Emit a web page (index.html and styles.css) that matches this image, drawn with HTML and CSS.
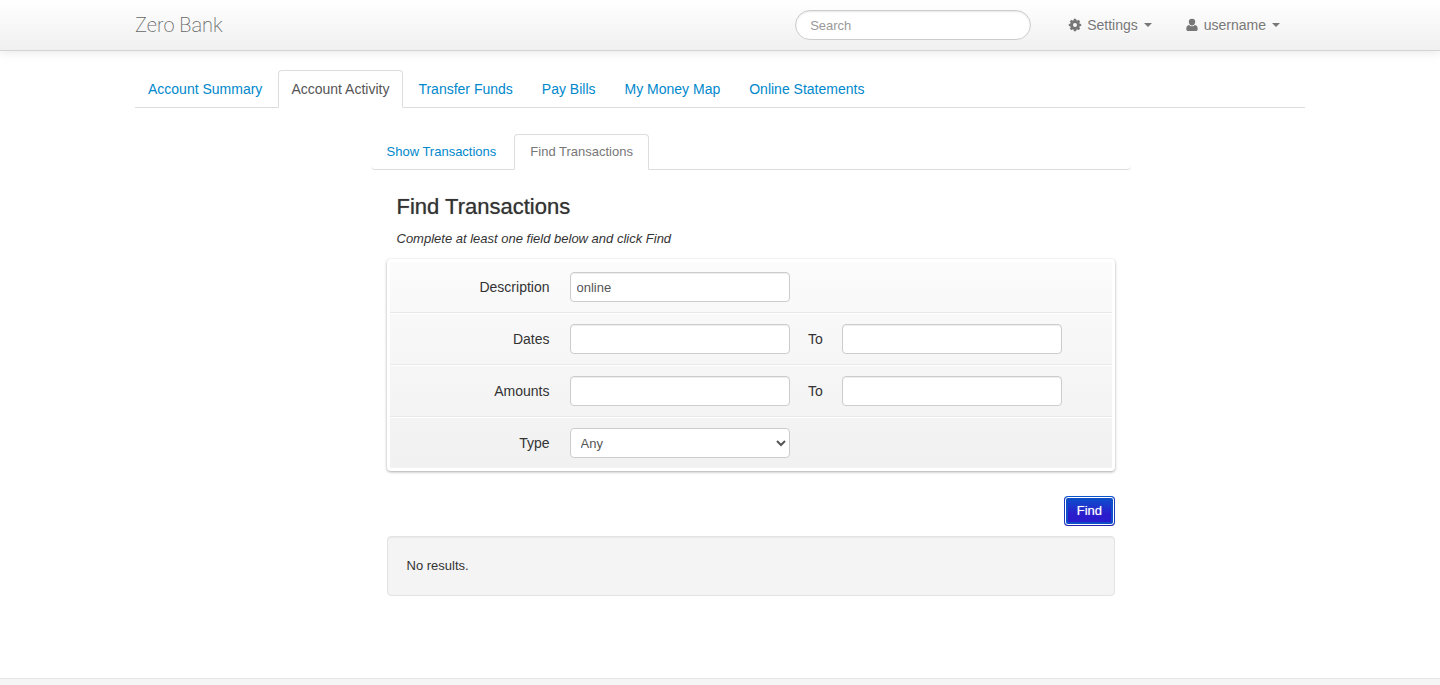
FILE: index.html
```
<!DOCTYPE html>
<html lang="en">
<head>
<meta charset="utf-8">
<meta name="viewport" content="width=device-width, initial-scale=1">
<title>Zero - Account Activity</title>
<link rel="stylesheet" href="styles.css">
</head>
<body>
<header class="navbar">
  <div class="container navbar-inner">
    <a class="brand" href="#">Zero Bank</a>
    <form class="search-form">
      <input class="search" type="text" placeholder="Search" aria-label="Search">
    </form>
    <nav class="user-nav">
      <a class="menu" href="#">
        <svg class="icon" viewBox="0 0 14 14" aria-hidden="true"><g fill="currentColor"><path fill-rule="evenodd" d="M7 2.200a4.800 4.800 0 1 0 0 9.600a4.800 4.800 0 1 0 0-9.600zM7 5a2 2 0 1 1 0 4a2 2 0 1 1 0-4z"/><path id="tooth" d="M5.900.8h2.200l.5 2.200H5.400z"/><use href="#tooth" transform="rotate(45 7 7)"/><use href="#tooth" transform="rotate(90 7 7)"/><use href="#tooth" transform="rotate(135 7 7)"/><use href="#tooth" transform="rotate(180 7 7)"/><use href="#tooth" transform="rotate(225 7 7)"/><use href="#tooth" transform="rotate(270 7 7)"/><use href="#tooth" transform="rotate(315 7 7)"/></g></svg>
        <span>Settings</span><span class="caret"></span>
      </a>
      <a class="menu" href="#">
        <svg class="icon" viewBox="0 0 14 14" aria-hidden="true"><path fill="currentColor" d="M7 .8a3.200 3.200 0 0 1 3.200 3.300C10.200 6 8.800 7.500 7 7.500S3.800 6 3.800 4.100A3.200 3.200 0 0 1 7 .8zM4 6.900c.8.900 1.800 1.400 3 1.400s2.200-.5 3-1.400c1.900.3 2.700 2 2.700 4 0 1.300-.9 2.100-2 2.100H3.300c-1.100 0-2-.8-2-2.100 0-2 .8-3.700 2.700-4z"/></svg>
        <span>username</span><span class="caret"></span>
      </a>
    </nav>
  </div>
</header>

<main class="container main">
  <nav class="tabs">
    <a class="tab" href="#">Account Summary</a>
    <a class="tab active" href="#" aria-current="page">Account Activity</a>
    <a class="tab" href="#">Transfer Funds</a>
    <a class="tab" href="#">Pay Bills</a>
    <a class="tab" href="#">My Money Map</a>
    <a class="tab" href="#">Online Statements</a>
  </nav>

  <section class="board">
    <nav class="subtabs">
      <a class="subtab" href="#">Show Transactions</a>
      <a class="subtab active" href="#" aria-current="page">Find Transactions</a>
    </nav>
    <div class="board-content">
      <h2 class="title">Find Transactions</h2>
      <p class="hint">Complete at least one field below and click Find</p>
      <form>
        <div class="panel">
          <div class="row">
            <label class="label" for="description">Description</label>
            <input class="field" id="description" type="text" value="online">
          </div>
          <div class="row">
            <label class="label" for="date-from">Dates</label>
            <input class="field" id="date-from" type="text">
            <label class="to" for="date-to">To</label>
            <input class="field" id="date-to" type="text">
          </div>
          <div class="row">
            <label class="label" for="amount-from">Amounts</label>
            <input class="field" id="amount-from" type="text">
            <label class="to" for="amount-to">To</label>
            <input class="field" id="amount-to" type="text">
          </div>
          <div class="row">
            <label class="label" for="type">Type</label>
            <select class="field select" id="type">
              <option>Any</option>
              <option>Deposit</option>
              <option>Withdrawal</option>
            </select>
          </div>
        </div>
        <div class="actions"><button class="find" type="button">Find</button></div>
      </form>
      <div class="results">No results.</div>
    </div>
  </section>
</main>
<footer class="footer"></footer>
</body>
</html>
```
FILE: styles.css
```
* { box-sizing: border-box; }

body {
  margin: 0;
  min-height: 100vh;
  display: flex;
  flex-direction: column;
  background: #fff;
  color: #333;
  font: 13px/20px "Liberation Sans", Arial, sans-serif;
}

a { color: #0088cc; text-decoration: none; }

input, select, button { font: inherit; }

.container {
  width: 100%;
  max-width: 1170px;
  margin: 0 auto;
}

.navbar {
  background: linear-gradient(#fff, #f0f0f0);
  border-bottom: 1px solid #d4d4d4;
  box-shadow: 0 1px 10px rgba(0, 0, 0, 0.1);
}

.navbar-inner {
  display: flex;
  align-items: center;
  height: 50px;
  padding-right: 25px;
}

.brand {
  color: #666;
  font-family: Roboto, "Liberation Sans", sans-serif;
  font-size: 20px;
  font-weight: 200;
}

.search-form { margin-left: auto; }

.search {
  display: block;
  width: 236px;
  height: 30px;
  padding: 4px 14px;
  border: 1px solid #ccc;
  border-radius: 15px;
  background: #fff;
  box-shadow: inset 0 1px 2px rgba(0, 0, 0, 0.1);
}

.search::placeholder { color: #999; opacity: 1; }

.user-nav {
  display: flex;
  gap: 33px;
  margin-left: 37px;
}

.menu {
  display: flex;
  align-items: center;
  color: #777;
  font-size: 14px;
  text-shadow: 0 1px 0 #fff;
}

.icon {
  width: 14px;
  height: 14px;
  margin-right: 5px;
}

.caret {
  margin-left: 6px;
  border: 4px solid transparent;
  border-top-color: #777;
  border-bottom: 0;
}

.main {
  flex: 1;
  padding-top: 19px;
  padding-bottom: 82px;
}

.tabs {
  display: flex;
  gap: 2px;
  border-bottom: 1px solid #ddd;
}

.tab {
  margin-bottom: -1px;
  padding: 8px 13px 8px 12px;
  border: 1px solid transparent;
  border-radius: 4px 4px 0 0;
  font-size: 14px;
}

.tab.active {
  border-color: #ddd;
  border-bottom-color: #fff;
  background: #fff;
  color: #555;
}

.board {
  width: 65%;
  margin: 26px 174px 0 auto;
}

.subtabs {
  display: flex;
  gap: 2px;
  border-bottom: 1px solid #ddd;
  border-radius: 4px;
}

.subtab {
  margin-bottom: -1px;
  padding: 7px 15px;
  border: 1px solid transparent;
  border-radius: 4px 4px 0 0;
}

.subtab.active {
  border-color: #ddd;
  border-bottom-color: #fff;
  background: #fff;
  color: #777;
}

.board-content { padding: 22px 16px 0; }

.title {
  margin: 0 10px;
  color: #333;
  font-size: 22px;
  font-weight: 400;
  line-height: 30px;
  text-shadow: 0 0 1px rgba(0, 0, 0, 0.5);
}

.hint {
  margin: 7px 10px 10px;
  font-style: italic;
}

.panel {
  padding: 3px;
  border-radius: 4px;
  background: linear-gradient(#fbfbfb, #f1f1f1) content-box, #fff;
  box-shadow: 0 1px 3px rgba(0, 0, 0, 0.35);
}

.row {
  display: flex;
  align-items: center;
  height: 52px;
  border-top: 1px solid #fff;
  border-bottom: 1px solid #e8e8e8;
}

.row:first-child { border-top: 0; height: 51px; }
.row:last-child { border-bottom: 0; height: 51px; }

.label {
  width: 160px;
  margin-right: 20px;
  font-size: 14px;
  text-align: right;
}

.to {
  width: 52px;
  font-size: 14px;
  text-align: center;
}

.field {
  width: 220px;
  height: 30px;
  padding: 4px 6px;
  border: 1px solid #ccc;
  border-radius: 4px;
  background: #fff;
  color: #555;
  box-shadow: inset 0 1px 1px rgba(0, 0, 0, 0.075);
}

.select { box-shadow: none; }

.actions {
  display: flex;
  justify-content: flex-end;
  margin: 25px 0 10px;
}

.find {
  height: 30px;
  padding: 0 12px;
  border: 1px solid;
  border-color: #0b55cc #1b3cbc #2322aa;
  border-radius: 4px;
  background: linear-gradient(#0b55cc, #2a1ccc 60%);
  box-shadow: inset 0 0 0 1px #fff, inset 0 0 0 3px #0f4cc8;
  color: #fff;
  text-shadow: 0 0 1px rgba(255, 255, 255, 0.5);
}

.results {
  padding: 19px;
  border: 1px solid #e3e3e3;
  border-radius: 4px;
  background: #f4f4f4;
  box-shadow: inset 0 1px 1px rgba(0, 0, 0, 0.05);
}

.footer {
  height: 7px;
  border-top: 1px solid #e5e5e5;
  background: #f5f5f5;
}
```
